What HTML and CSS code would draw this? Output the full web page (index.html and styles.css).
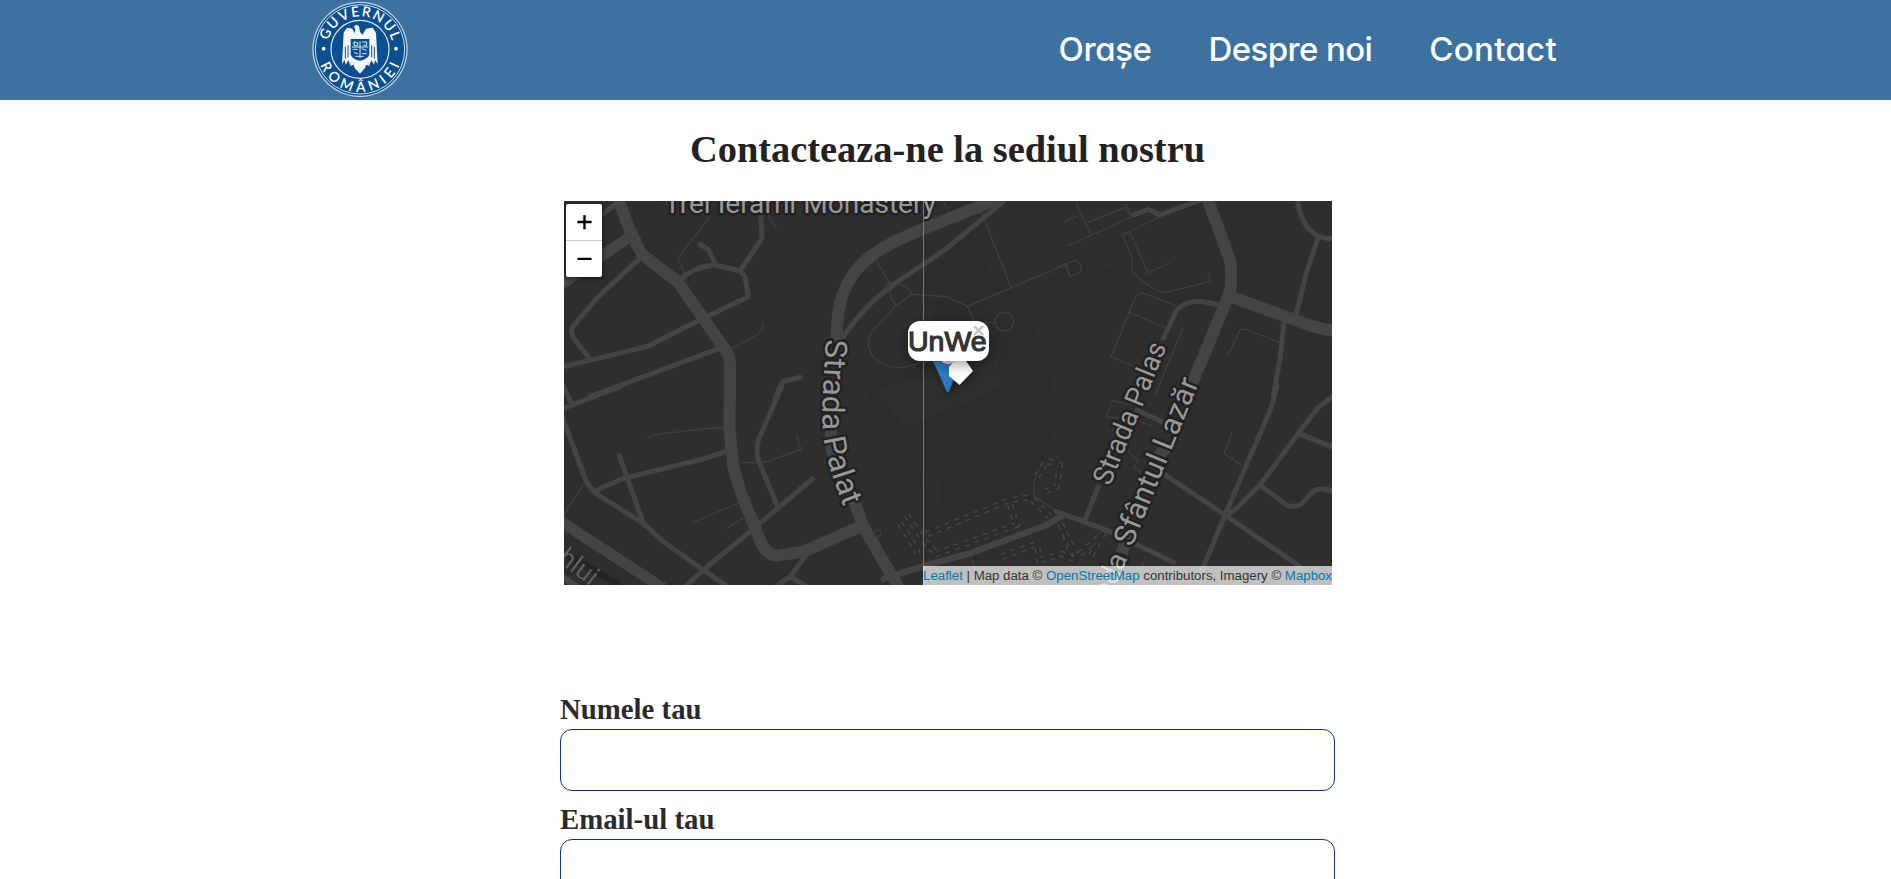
FILE: index.html
```html
<!DOCTYPE html>
<html lang="ro">
<head>
<meta charset="utf-8">
<title>Contact</title>
<link rel="stylesheet" href="styles.css">
</head>
<body>
<header class="navbar">
  <a class="logo" href="#" aria-label="Guvernul României">
    <svg viewBox="0 0 300 300" width="100" height="100">
      <defs>
        <path id="arc-top" d="M53 168 A99 99 0 1 1 247 168"/>
        <path id="arc-bottom" d="M22 148 A128 128 0 0 0 278 148"/>
      </defs>
      <circle cx="150" cy="148" r="143" fill="#c3d4e6"/>
      <circle cx="150" cy="148" r="139" fill="#0b4f93"/>
      <circle cx="150" cy="148" r="134" fill="none" stroke="#dce7f2" stroke-width="3"/>
      <circle cx="150" cy="148" r="87" fill="none" stroke="#e6eef6" stroke-width="3.5"/>
      <circle cx="41" cy="146" r="5.500" fill="#fff"/><circle cx="258" cy="146" r="5.500" fill="#fff"/>
      <text class="seal-text"><textPath href="#arc-top" startOffset="50%" text-anchor="middle" textLength="258">GUVERNUL</textPath></text>
      <text class="seal-text"><textPath href="#arc-bottom" startOffset="50%" text-anchor="middle" textLength="306">ROMÂNIEI</textPath></text>
      <path fill="#f4f8fc" d="M132 80L138 74L147 78L150 96L158 104L168 86L188 83L198 98L203 192L195 180L192 194L184 181L179 194L173 184L180 198L168 194L165 204L150 221L134 204L131 194L119 198L126 184L120 194L115 181L107 194L104 180L96 192L101 98L111 83L127 86L134 100L136 88Z"/>
      <path d="M106 140v36M114 136v36M185 136v36M193 140v36" stroke="#0b4f93" stroke-width="3"/>
      <path fill="#0b4f93" d="M122 117H178V164Q172 178 150 182Q128 178 122 164Z"/>
      <path d="M128 131l8-6 8 6M133 125v12h10v-10M156 126h14v10h-10M128 148h15M155 146l14 5M132 158l12 3M156 161h14M136 169h25M150 124v50M126 141h48" fill="none" stroke="#dbe7f3" stroke-width="3"/>
    </svg>
  </a>
  <nav class="menu">
    <a class="cities" href="#">Orașe</a>
    <a class="about" href="#">Despre noi</a>
    <a class="contact" href="#">Contact</a>
  </nav>
</header>
<main class="page">
  <h1 class="title">Contacteaza-ne la sediul nostru</h1>
  <section class="map">
    <svg class="tiles" viewBox="0 0 2304 1152">
      <defs>
        <path id="strada-palat" d="M784 415C784 500 772 590 776 675C778 745 800 820 850 945"/>
        <path id="steps-centre" d="M380 433L630 330L690 322L750 380M405 493L650 405L630 345M320 375L375 455L410 490M300 400L350 480L355 500M710 260L740 212L780 225L770 290L735 305M605 500L710 462L720 520M720 510L830 480M785 405L810 480"/>
        <path id="steps-east" d="M0 400L50 500L130 430L90 500M0 490L60 515"/>
      </defs>
      <!-- built-up areas -->
      <g fill="#2b2d2c">
        <path d="M1075 250L1220 80L1280 220L1335 255L1400 350L1450 480L1480 660L1420 820L1370 880L1140 960L1120 800L1060 850L990 870L870 700L920 560L1040 510L1130 430Z"/>
        <path d="M1445 240L1500 215L1510 170L1560 185L1600 210L1690 190L1670 235L1490 300Z"/>
        <path d="M1800 270L1930 240L1980 280L1960 310L1810 310Z"/>
      </g>
      <path fill="#2f2f2f" d="M930 560L1130 520L1300 470L1310 560L1020 680Z"/>
      <g class="roads">
        <!-- north-west -->
        <g transform="translate(-12 -18)">
          <path class="lane" d="M360 255Q400 215 465 210L540 228L606 130L602 60M420 148L445 163L465 205M540 228L555 245L565 305L430 370L260 455L10 515M245 185L115 305L38 395Q30 415 45 435L88 490M90 605L485 458M645 610L668 560L720 547M125 60L170 25"/>
          <path class="path" d="M380 245L353 190L450 65M625 60L650 105M520 458L590 420Q615 405 607 388"/>
          <path class="street" d="M0 270L205 128"/>
          <path class="major" d="M170 0L205 95L245 178L355 262L430 370L485 450Q510 475 510 510V610"/>
        </g>
        <!-- south-west -->
        <g transform="translate(-12 567)">
          <path class="lane" d="M10 55L180 -10M10 -10L38 45M0 60L75 265Q90 300 115 315L250 400L310 455L430 540L510 595M105 303L190 265L430 207L500 184M178 197L250 400M370 595L430 540L600 400L757 267M665 -10L595 150Q587 185 595 210L655 355M640 595L690 560L735 500M690 560L740 590"/>
          <path class="path" d="M260 145Q290 130 340 128L440 115L500 113M72 280L10 375M540 218L615 217L723 178L710 137M400 397L535 340M500 415L550 383"/>
          <path class="street" d="M0 393L310 595"/>
          <path d="M30 500L170 580" stroke="#242424" stroke-width="22"/>
          <path d="M0 555L50 590" stroke-width="20"/>
          <path class="major" d="M510 -10L508 110L520 230Q540 310 570 375L600 450Q617 495 650 497L730 485L900 410"/>
        </g>
        <!-- north centre -->
        <g transform="translate(708 -18)">
          <path class="path" d="M228 195L268 262Q320 265 338 298L440 305L502 334L800 208M268 262L272 305L288 332L215 410Q195 440 215 480Q245 520 310 517L400 495M288 332L338 298M230 305L268 262M540 40L632 275M430 20L445 45M502 334L525 385L585 382M800 208L810 245M793 80L810 72"/>
          <circle class="path" cx="613" cy="380" r="28"/>
          <path class="lane" d="M130 425Q170 365 230 308L300 255L430 168L610 20"/>
          <path class="major" d="M110 440C108 330 130 245 215 182C280 130 420 85 600 8"/>
        </g>
        <!-- south centre -->
        <g transform="translate(708 567)">
          <use href="#steps-centre" class="steps"/>
          <use href="#steps-centre" class="steps-gap"/>
          <path class="thick" d="M250 567L380 525L510 490L740 405L790 375"/>
          <path class="major" d="M90 50L95 180L165 340L190 410L300 600"/>
          <path class="path" d="M780 370L710 325Q690 300 715 240M222 432Q228 410 242 425Q246 435 232 440M510 495L522 525"/>
        </g>
        <!-- north-east -->
        <g transform="translate(1488 -18)">
          <path class="path" d="M45 15L90 117M25 152L215 65L195 38L80 83M12 82L55 62M190 15L210 50M300 65L187 120L215 185L217 232Q290 295 315 292L452 260L443 232M208 110L265 233L328 203M-5 215L45 195L62 210L65 230L30 245L15 210M345 330L245 293Q230 298 225 310L153 485L235 520M205 350L318 398M285 600L370 397M505 478L540 405L555 402L660 442"/>
          <path class="lane" d="M220 60L265 43L300 60L420 15M712 15Q720 70 745 100L775 125L816 133M775 125L740 230L708 360M672 385L660 490L640 605M310 430L350 345Q385 312 430 320L480 330"/>
          <path class="major" d="M440 5L510 195Q517 250 510 290L490 340L390 580M500 300L760 395L830 410"/>
        </g>
        <!-- south-east -->
        <g transform="translate(1488 567)">
          <use href="#steps-east" class="steps"/>
          <use href="#steps-east" class="steps-gap"/>
          <path class="path" d="M140 80L158 32L215 45M140 80L180 85M200 80L280 110M200 170Q210 200 235 210L220 235L290 265M515 130L492 190L545 228M255 505L245 530"/>
          <path class="lane" d="M650 -10L635 50L495 375L415 567M830 10L775 52L715 130L600 285L530 355Q510 370 495 375M715 130L820 172M600 285L680 345Q715 360 740 325Q760 295 785 297L830 303M300 245L495 375L720 530M-10 365L150 425L340 517M75 390L115 290M230 60L310 97"/>
          <path class="major" d="M320 170L285 210M210 420L185 490"/>
        </g>
      </g>
      <g class="labels">
        <text x="300" y="35" textLength="816" lengthAdjust="spacingAndGlyphs">Trei Ierarhi Monastery</text>
        <text class="bent"><textPath href="#strada-palat" textLength="512" lengthAdjust="spacingAndGlyphs">Strada Palat</textPath></text>
        <text transform="translate(1637 857) rotate(-67.8)" textLength="454" lengthAdjust="spacingAndGlyphs">Strada Palas</text>
        <text class="wide" transform="translate(1703 1040) rotate(-67.8)" textLength="535" lengthAdjust="spacingAndGlyphs">Sfântul Lazăr</text>
        <text transform="translate(1680 1098) rotate(-66)" text-anchor="end" x="30">Strada</text>
        <text class="faint" transform="translate(-22 1080) rotate(37)">hlui</text>
      </g>
    </svg>
    <div class="seam"></div>
    <svg class="marker" viewBox="0 0 60 32" width="60" height="32">
      <defs><linearGradient id="pin" x1="0" x2="1"><stop offset="0" stop-color="#3484ca"/><stop offset=".55" stop-color="#2c78ba"/><stop offset="1" stop-color="#1c6dad"/></linearGradient></defs>
      <path d="M0 0H28L15.500 31H14Z" fill="url(#pin)" stroke="#216294" stroke-width=".7"/>
      <ellipse cx="15" cy="0" rx="6" ry="3" fill="#d8dbe0"/>
      <path class="tip" d="M21 0H33L40 10L26.500 24L16 15V6Z"/>
    </svg>
    <div class="popup">UnWe<span class="close">×</span></div>
    <div class="zoom"><a href="#">+</a><a href="#">−</a></div>
    <div class="attribution"><a href="#">Leaflet</a> | Map data © <a href="#">OpenStreetMap</a> contributors, Imagery © <a href="#">Mapbox</a></div>
  </section>
  <form class="form">
    <label class="field"><span class="label">Numele tau</span><input class="input" type="text"></label>
    <label class="field"><span class="label">Email-ul tau</span><input class="input" type="text"></label>
  </form>
</main>
</body>
</html>
```
FILE: styles.css
```css
* { box-sizing: border-box; }
html { overflow: hidden; }
body { margin: 0; height: 879px; overflow: hidden; background: #fff; color: #2b2b2b; font-family: "Liberation Serif", serif; }
a { text-decoration: none; }

.navbar { display: flex; justify-content: space-between; height: 100px; padding: 0 334px 0 310px; background: #3d72a0; }
.logo { width: 100px; height: 100px; }
.logo svg { display: block; }
.seal-text { font: 600 42px Lato, sans-serif; fill: #fff; }
.menu { display: flex; align-items: center; gap: 57px; padding-bottom: 2px; font-family: Inter, sans-serif; font-size: 33px; font-weight: 500; font-feature-settings: "cv11"; }
.menu a { color: #fff; white-space: nowrap; }
.cities { letter-spacing: -.4px; }
.about { letter-spacing: -.6px; }
.contact { letter-spacing: .3px; }

.page { display: flex; flex-direction: column; align-items: center; }
.title { margin: 26px 0 0 4px; height: 75px; font-size: 38.4px; line-height: 46px; color: #222; }

.map { position: relative; width: 768px; height: 384px; margin-left: 5px; overflow: hidden; background: #2e2e2e; font-family: "Liberation Sans", sans-serif; }
.tiles { display: block; width: 768px; height: 384px; }
.roads { fill: none; stroke: #444; stroke-linecap: round; stroke-linejoin: round; }
.major { stroke-width: 36; stroke-linecap: butt; }
.street { stroke-width: 33; stroke-linecap: butt; }
.thick { stroke-width: 19; }
.lane { stroke-width: 15; }
.path { stroke-width: 3.5; stroke: #404040; }
.steps { stroke-width: 18; stroke: #484848; stroke-dasharray: 14 17; stroke-linecap: butt; }
.steps-gap { stroke-width: 10; stroke: #2d2d2d; stroke-linecap: butt; }
.labels { font: 84px Roboto, sans-serif; fill: #989898; stroke: #222; stroke-width: 15; stroke-linejoin: round; paint-order: stroke; }
.labels .bent { font-size: 92px; }
.labels .wide { font-size: 90px; }
.labels .faint { fill: #5f5f5f; stroke-width: 4; font-size: 80px; font-weight: 400; }
.seam { position: absolute; left: 359px; top: 0; width: 1px; height: 384px; background: #777; }

.marker { position: absolute; left: 369px; top: 160px; filter: drop-shadow(2px 3px 4px rgba(0, 0, 0, .4)); }
.tip { fill: #fff; }
.popup { position: absolute; left: 344px; top: 120px; width: 81px; height: 40px; border-radius: 12px; background: #fff; box-shadow: 0 3px 14px rgba(0, 0, 0, .4); color: #333; font-size: 28.500px; line-height: 40px; -webkit-text-stroke: 1.2px #333; }
.close { position: absolute; right: 3px; top: 0; color: #c3c3c3; font: bold 18px/17px "DejaVu Sans", sans-serif; -webkit-text-stroke: 0; }

.zoom { position: absolute; left: 2px; top: 3px; width: 36px; border-radius: 2px; overflow: hidden; background: #fff; box-shadow: 0 1px 5px rgba(0, 0, 0, .65); }
.zoom a { display: block; height: 36px; color: #000; font: 28px/35px "Liberation Sans", sans-serif; text-align: center; padding-left: 1px; -webkit-text-stroke: .4px #000; }
.zoom a:first-child { height: 37px; border-bottom: 1px solid #ccc; }
.attribution { position: absolute; right: 0; bottom: 0; height: 19px; background: rgba(255, 255, 255, .7); color: #333; font-size: 13.25px; line-height: 19px; white-space: nowrap; }
.attribution a { color: #0078a8; }

.form { display: flex; flex-direction: column; gap: 10px; width: 775px; margin: 106px 0 0 4px; }
.field { display: flex; flex-direction: column; }
.label { height: 38px; font-size: 28.8px; line-height: 36px; font-weight: bold; }
.input { width: 775px; height: 62px; border: 1px solid #0d3488; border-radius: 12px; background: #fff; }
```
